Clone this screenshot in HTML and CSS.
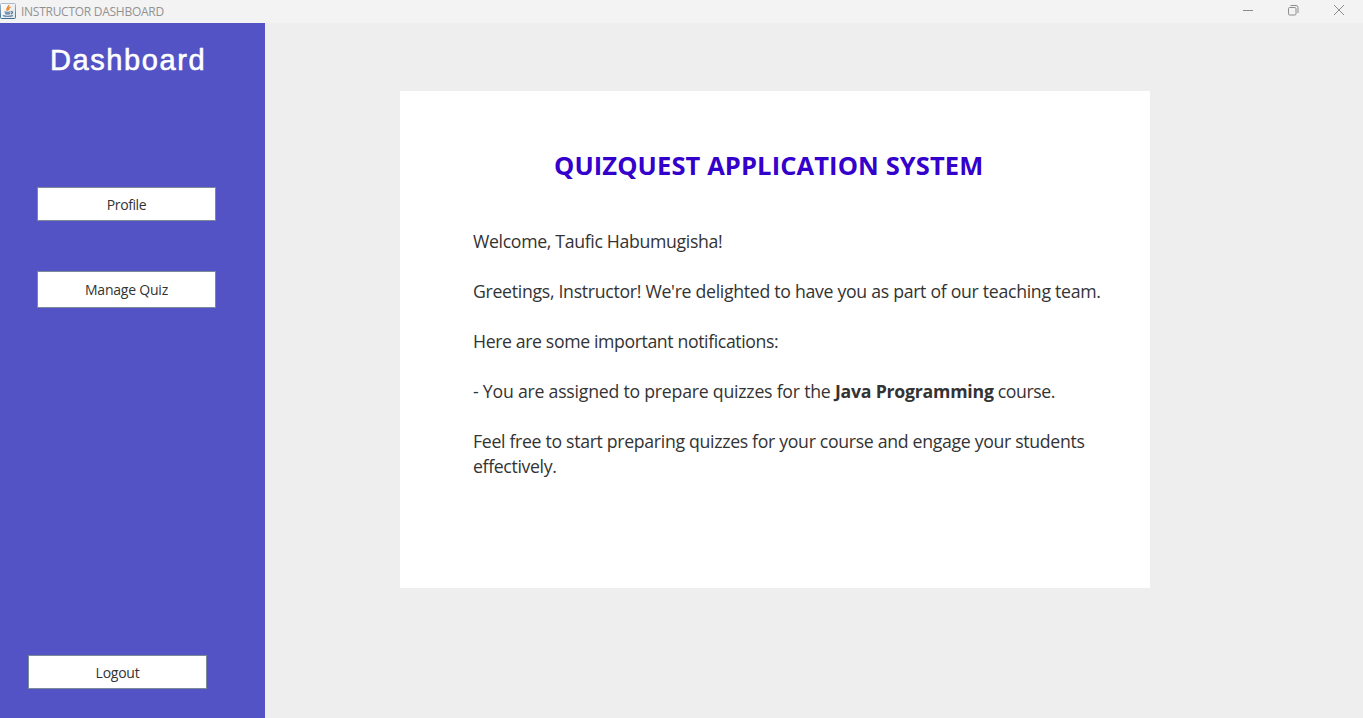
FILE: index.html
```html
<!DOCTYPE html>
<html lang="en">
<head>
<meta charset="utf-8">
<title>INSTRUCTOR DASHBOARD</title>
<link rel="stylesheet" href="styles.css">
</head>
<body>
<header class="titlebar">
  <svg class="app-icon" width="16" height="16" viewBox="0 0 16 16">
    <defs>
      <linearGradient id="frame" x1="0" y1="0" x2="0" y2="1"><stop offset="0" stop-color="#a9bccb"/><stop offset="1" stop-color="#416f92"/></linearGradient>
      <linearGradient id="face" x1="0" y1="0" x2="1" y2="1"><stop offset="0" stop-color="#ffffff"/><stop offset="1" stop-color="#dde3e8"/></linearGradient>
    </defs>
    <rect x="0.5" y="0.5" width="15" height="15" rx="1" fill="url(#face)" stroke="url(#frame)"/>
    <path d="M8.800 2C9.400 4 5.400 4.700 7.300 8.200M10.500 4.200C8.200 5.400 8.200 6 8.900 7.200" fill="none" stroke="#ec8b36" stroke-width="1.500"/>
    <path d="M4.500 8.700C6 9.300 9 9.200 10.500 8.700M5.200 10.500C6.500 11 8.700 11 10 10.500M11 8.500C13.300 8.300 12.700 10.400 10.900 11M3.500 12.300C2 13.300 10.500 13.800 12.700 12.400" fill="none" stroke="#4d779b" stroke-width="1.200"/>
  </svg>
  <span class="window-title">INSTRUCTOR DASHBOARD</span>
  <div class="controls">
    <svg class="control" width="45" height="20" viewBox="0 0 45 20"><path d="M18 10.500h10"/></svg>
    <svg class="control" width="46" height="20" viewBox="0 0 46 20"><rect x="18.500" y="7.500" width="7.500" height="7.500" rx="1.200"/><path d="M20.500 5.500h5.500a2 2 0 0 1 2 2v5.500"/></svg>
    <svg class="control" width="46" height="20" viewBox="0 0 46 20"><path d="M18 5l10 10M28 5l-10 10"/></svg>
  </div>
</header>
<div class="app">
  <nav class="sidebar">
    <h1 class="brand">Dashboard</h1>
    <button class="btn profile">Profile</button>
    <button class="btn manage">Manage Quiz</button>
    <button class="btn logout">Logout</button>
  </nav>
  <main class="content">
    <section class="card">
      <h2 class="heading">QUIZQUEST APPLICATION SYSTEM</h2>
      <div class="message">
        <p class="line welcome">Welcome, Taufic Habumugisha!</p>
        <p class="line greeting">Greetings, Instructor! We're delighted to have you as part of our teaching team.</p>
        <p class="line notice">Here are some important notifications:</p>
        <p class="line assigned">- You are assigned to prepare quizzes for the <b>Java Programming</b><span class="tail"> course.</span></p>
        <p class="line closing">Feel free to start preparing quizzes for your course and engage your students<br><span class="last">effectively.</span></p>
      </div>
    </section>
  </main>
</div>
</body>
</html>
```

FILE: styles.css
```css
* { box-sizing: border-box; }
body {
  margin: 0;
  height: 718px;
  display: flex;
  flex-direction: column;
  overflow: hidden;
  background: #eeeeee;
  color: #333333;
  font-family: "Open Sans", "Noto Sans", sans-serif;
}
.titlebar {
  height: 23px;
  flex: none;
  display: flex;
  align-items: flex-start;
  background: #f3f3f3;
  color: #929292;
}
.app-icon { margin-top: 3px; }
.window-title {
  margin-left: 5px;
  font-size: 12px;
  line-height: 23px;
  letter-spacing: -0.27px;
  white-space: nowrap;
}
.controls { display: flex; margin-left: auto; margin-right: 1px; }
.control { fill: none; stroke: #8c8c8c; stroke-width: 1; }
.app { flex: 1; display: flex; }
.sidebar {
  width: 265px;
  display: flex;
  flex-direction: column;
  align-items: flex-start;
  background: #5353c6;
}
.brand {
  margin: 19px 0 0 50px;
  font: 500 29px/36px "Liberation Sans", sans-serif;
  letter-spacing: 1.6px;
  color: #ffffff;
  -webkit-text-stroke: 0.6px #ffffff;
}
.btn {
  width: 179px;
  height: 34px;
  padding: 2px 0 0;
  border: 1px solid #7a8a99;
  background: #ffffff;
  color: #333333;
  font: 14px/18px "Open Sans", "Noto Sans", sans-serif;
}
.profile { margin: 109px 0 0 37px; letter-spacing: -0.42px; }
.manage { margin: 50px 0 0 37px; height: 37px; padding-top: 1px; letter-spacing: -0.22px; }
.logout { margin: auto 0 29px 28px; letter-spacing: -0.25px; }
.content { flex: 1; padding: 68px 0 0 135px; }
.card { width: 750px; height: 497px; background: #ffffff; padding: 56px 0 0 73px; }
.heading {
  margin: 0 0 0 81px;
  font-size: 25.5px;
  line-height: 36px;
  font-weight: 700;
  letter-spacing: 0.11px;
  color: #3300cc;
  white-space: nowrap;
}
.message { margin-top: 46px; font-size: 17.7px; line-height: 25px; white-space: nowrap; }
.line { margin: 0 0 25px; }
.welcome { letter-spacing: -0.34px; }
.greeting { letter-spacing: -0.3px; }
.notice { letter-spacing: -0.385px; }
.assigned { letter-spacing: -0.23px; }
.tail { letter-spacing: -0.45px; }
.closing { letter-spacing: -0.32px; }
.last { letter-spacing: -0.36px; }
```
